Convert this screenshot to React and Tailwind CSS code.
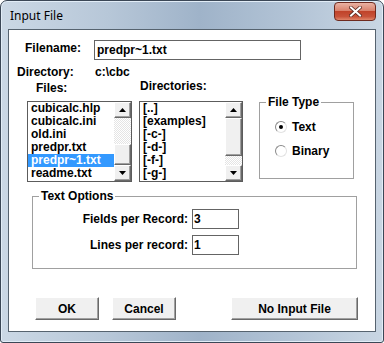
import React from "react";

const files = ["cubicalc.hlp", "cubicalc.ini", "old.ini", "predpr.txt", "predpr~1.txt", "readme.txt"];
const dirs = ["[..]", "[examples]", "[-c-]", "[-d-]", "[-f-]", "[-g-]"];

const Arrow = ({ down }) => (
  <svg width="7" height="4" viewBox="0 0 7 4">
    <path d={down ? "M0 0h7L3.5 4z" : "M0 4h7L3.5 0z"} fill="#000" />
  </svg>
);

const ScrollBtn = ({ down }) => (
  <div className="h-[16px] flex items-center justify-center bg-[#f0f0f0] border border-t-white border-l-white border-r-[#696969] border-b-[#696969] shadow-[inset_-1px_-1px_0_#a0a0a0]">
    <Arrow down={down} />
  </div>
);

const Track = ({ h }) => (
  <div className={`${h} bg-[repeating-conic-gradient(#ffffff_0_25%,#e4e4e4_0_50%)] bg-[length:2px_2px]`} />
);

const Thumb = ({ h }) => (
  <div className={`${h} bg-[#f0f0f0] border border-t-white border-l-white border-r-[#696969] border-b-[#696969] shadow-[inset_-1px_-1px_0_#a0a0a0]`} />
);

const ListBox = ({ items, selected, width, thumbFirst }) => (
  <div className={`${width} h-[81px] flex border border-[#5c5c5c] bg-white`}>
    <div className="flex-1 overflow-hidden">
      {items.map((it) => (
        <div
          key={it}
          className={`h-[13px] leading-[13px] pl-[3px] whitespace-nowrap ${
            it === selected ? "bg-[#3399ff] text-white" : "text-black"
          }`}
        >
          {it}
        </div>
      ))}
    </div>
    <div className="w-[17px] flex flex-col">
      <ScrollBtn />
      {thumbFirst ? (
        <>
          <Thumb h="h-[38px]" />
          <Track h="h-[9px]" />
        </>
      ) : (
        <>
          <Track h="h-[26px]" />
          <Thumb h="h-[21px]" />
        </>
      )}
      <ScrollBtn down />
    </div>
  </div>
);

const Radio = ({ checked, label }) => (
  <div className="flex items-center h-[14px]">
    <div className="w-[12px] h-[12px] rounded-full bg-white border border-t-[#8a8a8a] border-l-[#8a8a8a] border-r-[#e2e2e2] border-b-[#e2e2e2] flex items-center justify-center">
      {checked && <div className="w-[4px] h-[4px] rounded-full bg-black" />}
    </div>
    <span className="ml-[5px] leading-[14px]">{label}</span>
  </div>
);

const Button = ({ width, className = "", children }) => (
  <button
    className={`${width} h-[23px] bg-[#f0f0f0] border border-t-white border-l-white border-r-[#696969] border-b-[#696969] shadow-[inset_-1px_-1px_0_#a0a0a0] text-[12px] font-bold leading-[14px] text-black ${className}`}
  >
    {children}
  </button>
);

export default function App() {
  return (
    <div className="w-[384px] h-[343px] overflow-hidden rounded-t-[7px] rounded-b-[3px] border border-[#3b4756] bg-[linear-gradient(90deg,#cbd8e5_0%,#b7c7d8_28%,#9fb3c9_52%,#b4c5d7_78%,#c9d6e3_100%)] shadow-[inset_0_0_0_1px_#e2edf7]">
      {/* Title bar */}
      <div className="h-[28px] flex items-start justify-between">
        <span className="ml-[9px] mt-[7px] text-[12px] leading-[16px] text-black font-['Noto_Sans',sans-serif]">
          Input File
        </span>
        <div className="mt-[1px] mr-[7px] w-[42px] h-[19px] rounded-[4px] border border-[#6e2a1f] bg-[linear-gradient(180deg,#e9b2a3_0%,#d9826d_45%,#c0432a_50%,#c8533a_80%,#e0866a_100%)] flex items-center justify-center">
          <svg width="13" height="11" viewBox="0 0 13 11">
            <path d="M2 1.5l9 8M11 1.5l-9 8" stroke="#5a2a22" strokeWidth="3.6" strokeLinecap="square" />
            <path d="M2 1.5l9 8M11 1.5l-9 8" stroke="#fff" strokeWidth="2" strokeLinecap="square" />
          </svg>
        </div>
      </div>

      {/* Client area */}
      <div className="ml-[7px] w-[368px] h-[303px] border border-[#56636f] bg-white text-[12px] font-bold text-black font-['Liberation_Sans',Arial,sans-serif]">
        {/* Filename */}
        <div className="flex items-start pt-[10px]">
          <span className="ml-[16px] w-[69px] shrink-0 leading-[14px] mt-[1px]">Filename:</span>
          <div className="w-[207px] h-[20px] border border-[#646464] pl-[2px] pt-[2px] leading-[14px]">
            predpr~1.txt
          </div>
        </div>

        {/* Directory */}
        <div className="flex mt-[5px] leading-[14px]">
          <span className="ml-[8px] w-[78px] shrink-0">Directory:</span>
          <span>{"c:\\cbc"}</span>
        </div>

        {/* Column labels */}
        <div className="flex h-[16px] leading-[14px]">
          <span className="ml-[27px] w-[104px] shrink-0 mt-[2px]">Files:</span>
          <span>Directories:</span>
        </div>

        {/* Lists + file type */}
        <div className="flex items-start h-[87px]">
          <div className="ml-[18px] mt-[6px]">
            <ListBox items={files} selected="predpr~1.txt" width="w-[105px]" />
          </div>
          <div className="ml-[7px] mt-[6px]">
            <ListBox items={dirs} width="w-[104px]" thumbFirst />
          </div>
          <fieldset className="ml-[16px] w-[95px] h-[84px] border border-[#a0a0a0]">
            <legend className="ml-[6px] px-[2px] leading-[14px]">File Type</legend>
            <div className="pl-[15px] mt-[11px] flex flex-col gap-[10px]">
              <Radio checked label="Text" />
              <Radio label="Binary" />
            </div>
          </fieldset>
        </div>

        {/* Text options */}
        <fieldset className="mt-[7px] ml-[23px] w-[325px] h-[80px] border border-[#a0a0a0]">
          <legend className="ml-[6px] px-[2px] leading-[14px]">Text Options</legend>
          <div className="mt-[6px] flex flex-col gap-[6px]">
            <div className="flex items-center h-[20px]">
              <span className="w-[155px] text-right leading-[14px]">Fields per Record:</span>
              <div className="ml-[4px] w-[47px] h-[20px] border border-[#646464] pl-[1px] pt-[2px] leading-[14px]">3</div>
            </div>
            <div className="flex items-center h-[20px]">
              <span className="w-[155px] text-right leading-[14px]">Lines per record:</span>
              <div className="ml-[4px] w-[47px] h-[20px] border border-[#646464] pl-[1px] pt-[2px] leading-[14px]">1</div>
            </div>
          </div>
        </fieldset>

        {/* Buttons */}
        <div className="flex mt-[28px]">
          <Button width="w-[64px]" className="ml-[26px]">OK</Button>
          <Button width="w-[64px]" className="ml-[13px]">Cancel</Button>
          <Button width="w-[127px]" className="ml-[55px]">No Input File</Button>
        </div>
      </div>
    </div>
  );
}
